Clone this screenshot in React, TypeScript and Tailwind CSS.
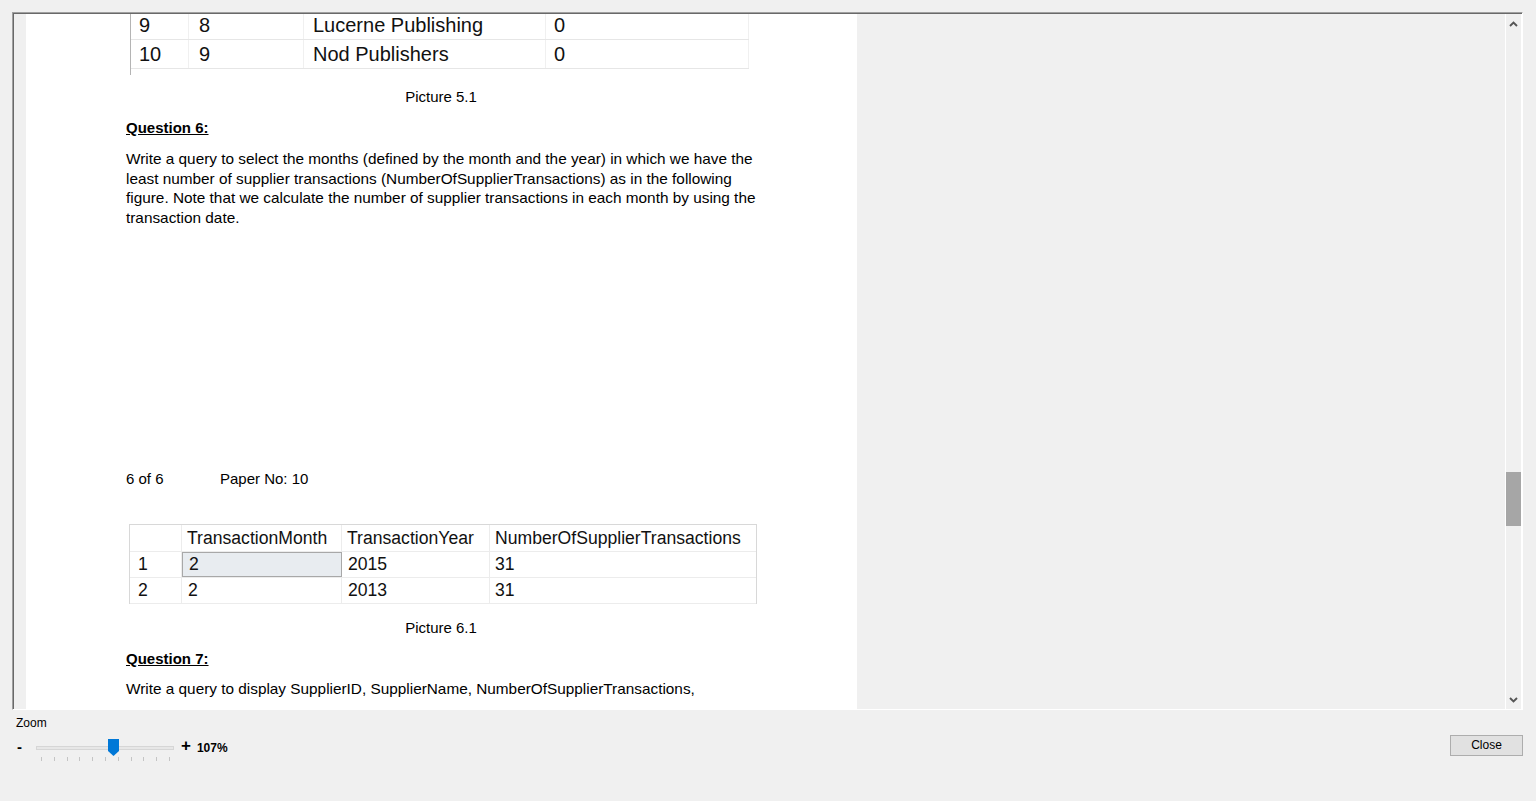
import React from "react"

const font = { fontFamily: '"Liberation Sans", Arial, sans-serif' }

const oldRows = [
    { n: "9", id: "8", name: "Lucerne Publishing", count: "0" },
    { n: "10", id: "9", name: "Nod Publishers", count: "0" },
]

const monthRows = [
    { n: "1", month: "2", year: "2015", count: "31", selected: true },
    { n: "2", month: "2", year: "2013", count: "31", selected: false },
]

function Chevron({ up }: { up?: boolean }) {
    return (
        <svg width="9" height="6" viewBox="0 0 9 6" className="block">
            <path
                d={up ? "M1 5 L4.5 1.5 L8 5" : "M1 1 L4.5 4.5 L8 1"}
                fill="none"
                stroke="#555"
                strokeWidth="1.9"
            />
        </svg>
    )
}

function Scrollbar() {
    return (
        <div className="w-[17px] shrink-0 bg-[#f0f0f0] border-l border-r border-white flex flex-col">
            <div className="h-[17px] flex items-center justify-center mt-[1px]">
                <Chevron up />
            </div>
            <div className="h-[440px]" />
            <div className="h-[54px] bg-[#a6a6a6]" />
            <div className="flex-1" />
            <div className="h-[17px] flex items-center justify-center mb-[1px]">
                <Chevron />
            </div>
        </div>
    )
}

function Page() {
    return (
        <div className="w-[831px] shrink-0 bg-white pl-[100px] text-black" style={font}>
            {/* tail of picture 5.1 */}
            <div className="-mt-[3px] ml-[4px] w-[619px] border-l border-[#b4b4b4] pb-[6px] text-[20px] text-[#111]">
                {oldRows.map(r => (
                    <div key={r.n} className="flex h-[29px] items-center border-b border-[#e6e6e6]">
                        <div className="w-[58px] pl-[8px] border-r border-[#f0f0f0] h-full flex items-center">{r.n}</div>
                        <div className="w-[115px] pl-[10px] border-r border-[#f0f0f0] h-full flex items-center">{r.id}</div>
                        <div className="w-[242px] pl-[9px] border-r border-[#f0f0f0] h-full flex items-center">{r.name}</div>
                        <div className="w-[203px] pl-[8px] border-r border-[#f0f0f0] h-full flex items-center">{r.count}</div>
                    </div>
                ))}
            </div>

            <div className="w-[630px] mt-[13px] text-center text-[15px] leading-[18px]">Picture 5.1</div>

            <div className="mt-[13px] text-[15px] leading-[18px] font-bold underline">Question 6:</div>

            <div className="mt-[12px] text-[15.35px] leading-[19.5px] whitespace-nowrap">
                <div>Write a query to select the months (defined by the month and the year) in which we have the</div>
                <div>least number of supplier transactions (NumberOfSupplierTransactions) as in the following</div>
                <div>figure. Note that we calculate the number of supplier transactions in each month by using the</div>
                <div>transaction date.</div>
            </div>

            <div className="mt-[243px] flex text-[15px] leading-[18px]">
                <span className="w-[94px]">6 of 6</span>
                <span>Paper No: 10</span>
            </div>

            {/* picture 6.1 */}
            <div className="mt-[36px] ml-[3px] w-[628px] border-t border-l border-r border-[#d8d8d8] text-[17.6px] text-[#111]">
                <div className="flex h-[27px] items-center border-b border-[#ececec]">
                    <div className="w-[52px] h-full border-r border-[#ececec]" />
                    <div className="w-[160px] pl-[5px] h-full flex items-center border-r border-[#ececec]">TransactionMonth</div>
                    <div className="w-[148px] pl-[5px] h-full flex items-center border-r border-[#ececec]">TransactionYear</div>
                    <div className="flex-1 pl-[5px] h-full flex items-center">NumberOfSupplierTransactions</div>
                </div>
                {monthRows.map(r => (
                    <div key={r.n} className="flex h-[26px] items-center border-b border-[#ececec]">
                        <div className="w-[52px] pl-[8px] h-full flex items-center border-r border-[#ececec]">{r.n}</div>
                        <div
                            className={`w-[160px] pl-[6px] h-full flex items-center ${
                                r.selected ? "bg-[#e8ecf0] border border-[#a8a8a8]" : "border-r border-[#ececec]"
                            }`}
                        >
                            {r.month}
                        </div>
                        <div className="w-[148px] pl-[6px] h-full flex items-center border-r border-[#ececec]">{r.year}</div>
                        <div className="flex-1 pl-[5px] h-full flex items-center">{r.count}</div>
                    </div>
                ))}
            </div>

            <div className="w-[630px] mt-[15px] text-center text-[15px] leading-[18px]">Picture 6.1</div>

            <div className="mt-[13px] text-[15px] leading-[18px] font-bold underline">Question 7:</div>

            <div className="mt-[12px] text-[15.35px] leading-[18px] whitespace-nowrap">
                Write a query to display SupplierID, SupplierName, NumberOfSupplierTransactions,
            </div>
        </div>
    )
}

function ZoomSlider() {
    const ticks = Array.from({ length: 11 }, (_, i) => i)
    return (
        <div className="relative w-[138px] h-[30px]">
            <div className="absolute left-0 right-0 top-[9px] h-[4px] bg-[#e7e7e7] border border-[#d6d6d6]" />
            <div className="absolute left-[5px] top-[20px] flex gap-[11.8px]">
                {ticks.map(t => (
                    <div key={t} className="w-px h-[4px] bg-[#c4c4c4]" />
                ))}
            </div>
            <svg className="absolute left-[72px] top-[2px]" width="11" height="17" viewBox="0 0 11 17">
                <path d="M0 0 H11 V12 L5.5 17 L0 12 Z" fill="#0078d7" />
            </svg>
        </div>
    )
}

export default function App() {
    return (
        <div className="w-[1536px] h-[801px] bg-[#f0f0f0] overflow-hidden flex flex-col" style={font}>
            {/* viewer */}
            <div className="mt-[12px] ml-[12px] w-[1511px] h-[698px] border-t border-l border-[#a0a0a0] border-r border-b border-r-white border-b-white">
                <div className="h-full border-t border-l border-[#696969] flex">
                    <div className="flex-1 pl-[12px] overflow-hidden flex">
                        <Page />
                    </div>
                    <Scrollbar />
                </div>
            </div>

            {/* zoom controls */}
            <div className="flex-1 flex justify-between">
                <div className="pl-[16px] pt-[6px]">
                    <div className="text-[12px] leading-[15px] text-black">Zoom</div>
                    <div className="flex items-start mt-[6px]">
                        <span className="w-[20px] pl-[1px] text-[15px] leading-[20px] font-bold">-</span>
                        <ZoomSlider />
                        <span className="ml-[7px] text-[17px] leading-[18px] font-bold">+</span>
                        <span className="ml-[6px] mt-[3px] text-[12px] leading-[16px] font-bold">107%</span>
                    </div>
                </div>
                <div className="pt-[22px] pr-[13px]">
                    <button className="w-[73px] h-[21px] bg-[#e1e1e1] border border-[#adadad] text-[12px] text-black leading-none">
                        Close
                    </button>
                </div>
            </div>
        </div>
    )
}
